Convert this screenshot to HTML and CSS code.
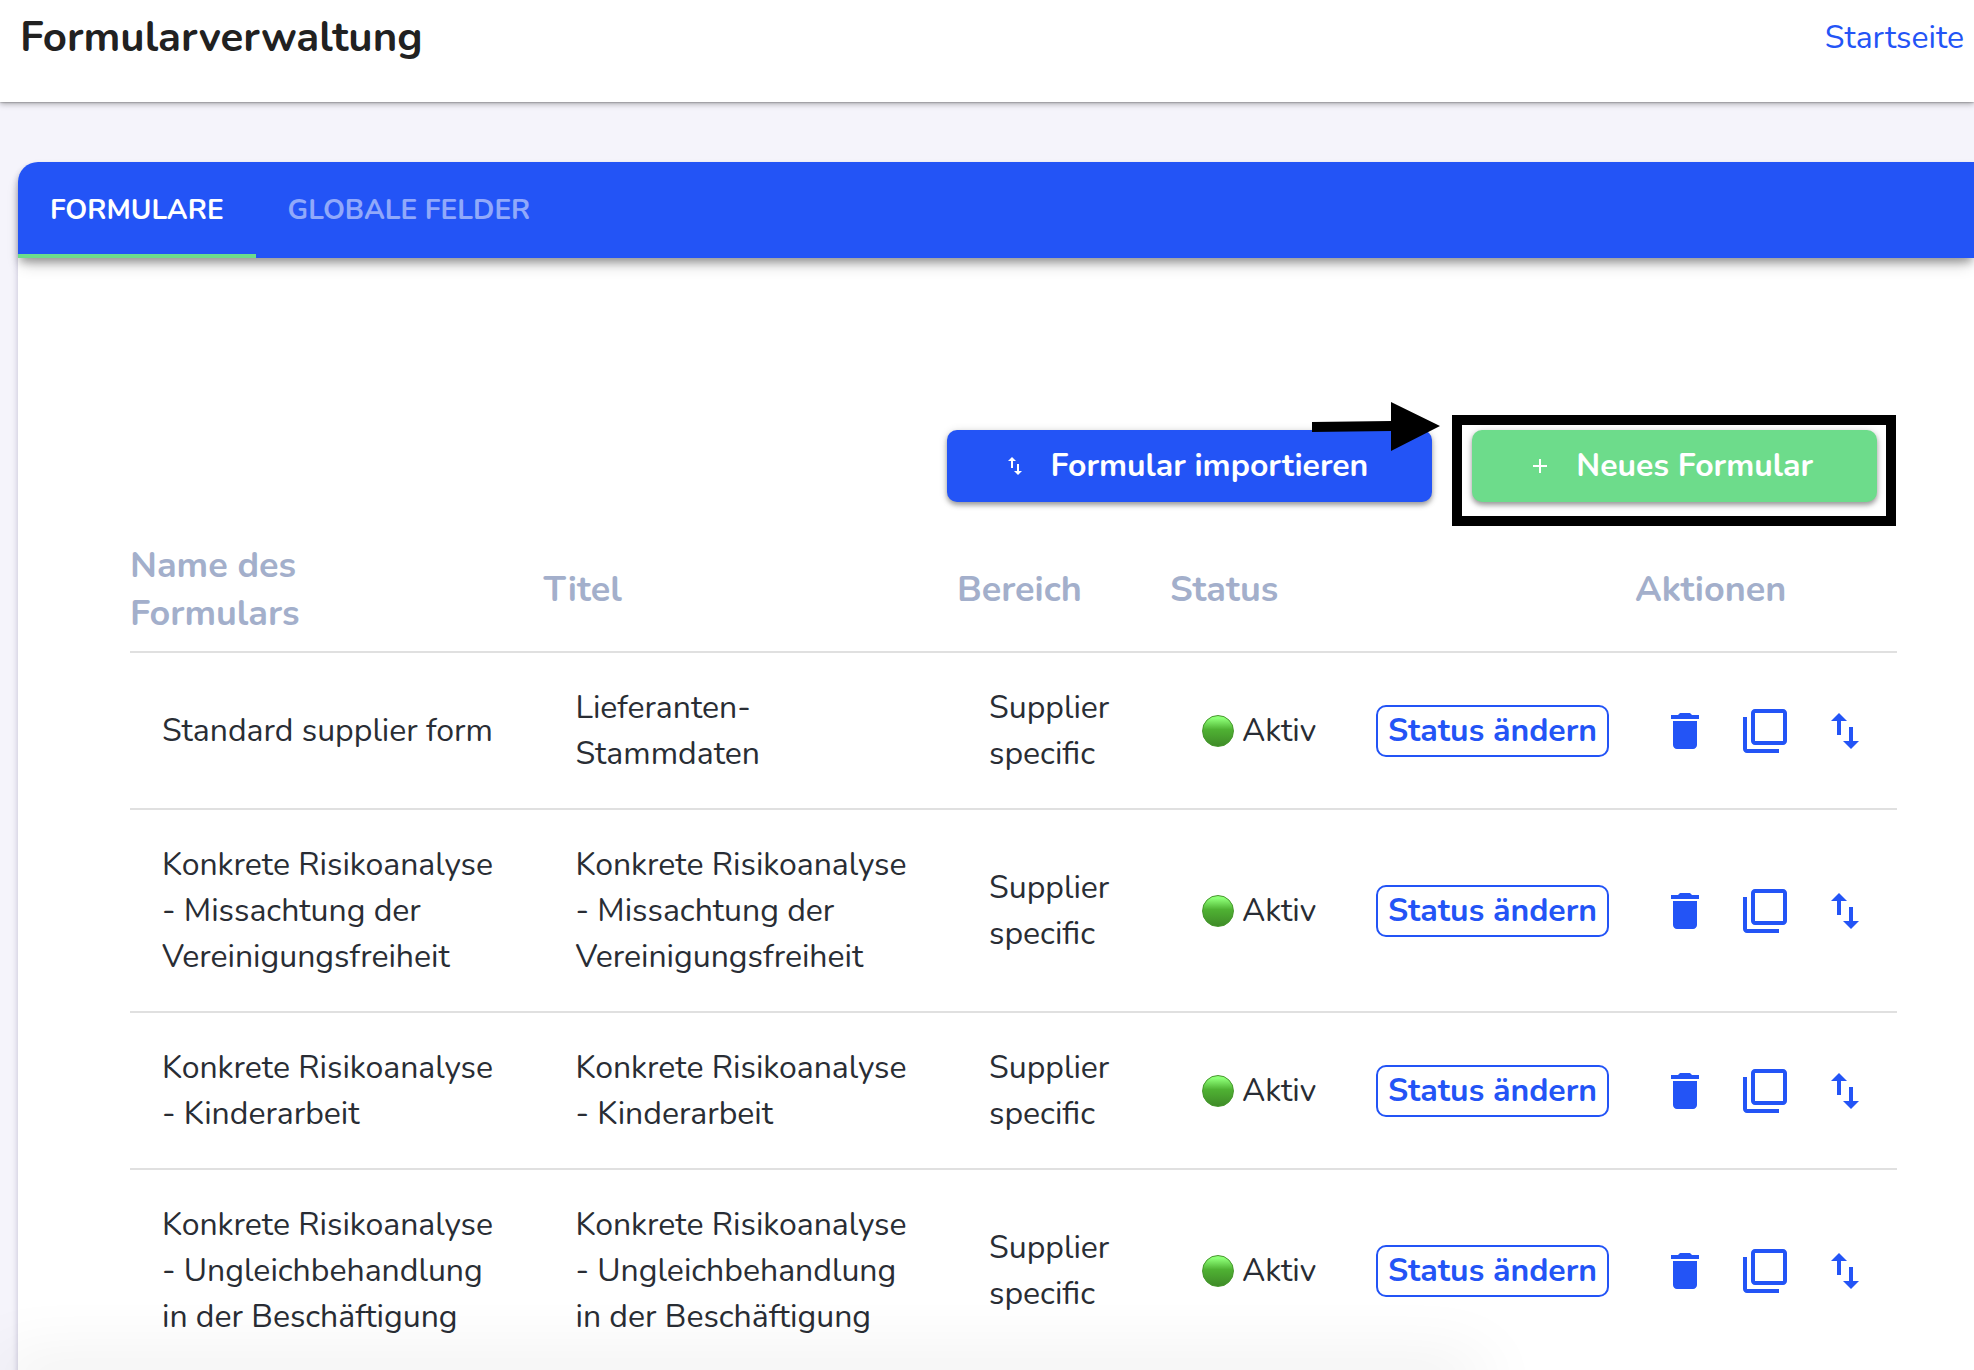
FILE: index.html
```html
<!DOCTYPE html>
<html lang="de">
<head>
<meta charset="utf-8">
<meta name="viewport" content="width=device-width, initial-scale=1">
<title>Formularverwaltung</title>
<link rel="stylesheet" href="styles.css">
</head>
<body>
<svg class="sprite" aria-hidden="true">
  <symbol id="i-trash" viewBox="0 0 24 24"><path d="M6 19c0 1.100.9 2 2 2h8c1.100 0 2-.9 2-2V7H6v12zM19 4h-3.500l-1-1h-5l-1 1H5v2h14V4z"/></symbol>
  <symbol id="i-copy" viewBox="0 0 24 24"><path d="M3 5H1v16c0 1.100.9 2 2 2h16v-2H3V5zm18-4H7c-1.100 0-2 .9-2 2v14c0 1.100.9 2 2 2h14c1.100 0 2-.9 2-2V3c0-1.100-.9-2-2-2zm0 16H7V3h14v14z"/></symbol>
  <symbol id="i-swap" viewBox="0 0 24 24"><path d="M16 17.010V10h-2v7.010h-3L15 21l4-3.990h-3zM9 3L5 6.990h3V14h2V6.990h3L9 3z"/></symbol>
  <symbol id="i-plus" viewBox="0 0 24 24"><path d="M19 13h-6v6h-2v-6H5v-2h6V5h2v6h6v2z"/></symbol>
</svg>

<header class="topbar">
  <h1 class="title">Formularverwaltung</h1>
  <a class="home" href="#">Startseite</a>
</header>

<main class="card">
  <div class="tabs" role="tablist">
    <button class="tab active" role="tab" aria-selected="true">FORMULARE</button>
    <button class="tab" role="tab" aria-selected="false">GLOBALE FELDER</button>
  </div>

  <div class="content">
    <div class="toolbar">
      <button class="btn primary"><svg class="btn-icon"><use href="#i-swap"/></svg>Formular importieren</button>
      <div class="highlight">
        <button class="btn success"><svg class="btn-icon"><use href="#i-plus"/></svg>Neues Formular</button>
        <span class="frame"></span>
        <svg class="arrow" viewBox="0 0 128 49"><path d="M0 20L79 19V0L128 24L79 49V29L0 30z"/></svg>
      </div>
    </div>

    <table class="forms">
      <colgroup>
        <col><col><col class="c-area"><col class="c-status"><col class="c-change"><col class="c-actions">
      </colgroup>
      <thead>
        <tr><th>Name des<br>Formulars</th><th>Titel</th><th>Bereich</th><th>Status</th><th></th><th>Aktionen</th></tr>
      </thead>
      <tbody>
        <tr>
          <td>Standard supplier form</td>
          <td>Lieferanten-<br>Stammdaten</td>
          <td>Supplier<br>specific</td>
          <td><span class="status"><i class="dot"></i>Aktiv</span></td>
          <td><button class="change">Status ändern</button></td>
          <td><div class="icons"><button class="icon" aria-label="Löschen"><svg><use href="#i-trash"/></svg></button><button class="icon" aria-label="Kopieren"><svg><use href="#i-copy"/></svg></button><button class="icon" aria-label="Exportieren"><svg><use href="#i-swap"/></svg></button></div></td>
        </tr>
        <tr>
          <td>Konkrete Risikoanalyse<br>- Missachtung der<br>Vereinigungsfreiheit</td>
          <td>Konkrete Risikoanalyse<br>- Missachtung der<br>Vereinigungsfreiheit</td>
          <td>Supplier<br>specific</td>
          <td><span class="status"><i class="dot"></i>Aktiv</span></td>
          <td><button class="change">Status ändern</button></td>
          <td><div class="icons"><button class="icon" aria-label="Löschen"><svg><use href="#i-trash"/></svg></button><button class="icon" aria-label="Kopieren"><svg><use href="#i-copy"/></svg></button><button class="icon" aria-label="Exportieren"><svg><use href="#i-swap"/></svg></button></div></td>
        </tr>
        <tr>
          <td>Konkrete Risikoanalyse<br>- Kinderarbeit</td>
          <td>Konkrete Risikoanalyse<br>- Kinderarbeit</td>
          <td>Supplier<br>specific</td>
          <td><span class="status"><i class="dot"></i>Aktiv</span></td>
          <td><button class="change">Status ändern</button></td>
          <td><div class="icons"><button class="icon" aria-label="Löschen"><svg><use href="#i-trash"/></svg></button><button class="icon" aria-label="Kopieren"><svg><use href="#i-copy"/></svg></button><button class="icon" aria-label="Exportieren"><svg><use href="#i-swap"/></svg></button></div></td>
        </tr>
        <tr>
          <td>Konkrete Risikoanalyse<br>- Ungleichbehandlung<br>in der Beschäftigung</td>
          <td>Konkrete Risikoanalyse<br>- Ungleichbehandlung<br>in der Beschäftigung</td>
          <td>Supplier<br>specific</td>
          <td><span class="status"><i class="dot"></i>Aktiv</span></td>
          <td><button class="change">Status ändern</button></td>
          <td><div class="icons"><button class="icon" aria-label="Löschen"><svg><use href="#i-trash"/></svg></button><button class="icon" aria-label="Kopieren"><svg><use href="#i-copy"/></svg></button><button class="icon" aria-label="Exportieren"><svg><use href="#i-swap"/></svg></button></div></td>
        </tr>
      </tbody>
    </table>
  </div>
</main>
<div class="shade"></div>
</body>
</html>
```

FILE: styles.css
```css
* { box-sizing: border-box; }

body {
  margin: 0;
  height: 100vh;
  overflow: hidden;
  background: #f5f4fb;
  color: #292d34;
  font: 400 32px/46px Nunito, "Noto Sans", sans-serif;
}

button {
  margin: 0;
  padding: 0;
  border: 0;
  background: none;
  color: inherit;
  font: inherit;
  cursor: pointer;
}

svg { display: block; fill: currentColor; }
.sprite { position: absolute; width: 0; height: 0; }

.topbar {
  display: flex;
  justify-content: space-between;
  padding: 14px 10px 40px 20px;
  background: #fff;
  box-shadow: 0 0 2px rgba(0, 0, 0, .5), 0 2px 6px rgba(0, 0, 0, .3);
}
.title { margin: 0; font-size: 42px; line-height: 48px; font-weight: 700; color: #212121; }
.home { line-height: 48px; color: #2354f6; text-decoration: none; }

.card {
  margin: 60px 0 0 18px;
  border-top-left-radius: 20px;
  background: #fff;
  box-shadow: 0 4px 6px rgba(40, 30, 90, .25);
}
.tabs {
  display: flex;
  border-top-left-radius: 20px;
  background: #2354f6;
  color: #fff;
  box-shadow: 0 6px 8px -2px rgba(0, 0, 0, .3), 0 10px 16px -4px rgba(0, 0, 0, .2);
}
.tab {
  height: 96px;
  padding: 4px 32px 0;
  border-bottom: 4px solid transparent;
  font-size: 28px;
  font-weight: 700;
  color: rgba(255, 255, 255, .5);
}
.tab.active { border-color: #6ddc8b; color: #fff; }

.content { padding: 172px 77px 0 112px; }

.toolbar { display: flex; justify-content: flex-end; gap: 40px; padding-right: 20px; }
.btn {
  display: flex;
  align-items: center;
  gap: 24px;
  height: 72px;
  padding: 0 64px 0 56px;
  border-radius: 10px;
  color: #fff;
  font-weight: 700;
  box-shadow: 0 3px 5px rgba(0, 0, 0, .35), 0 1px 10px rgba(0, 0, 0, .12);
}
.btn-icon { width: 24px; height: 24px; }
.primary { background: #2354f6; }
.success { background: #6ddc8b; }

.highlight { position: relative; }
.frame {
  position: absolute;
  inset: -15px -19px -24px -20px;
  border: 10px solid #000;
  pointer-events: none;
}
.arrow {
  position: absolute;
  left: -160px;
  top: -28px;
  width: 128px;
  height: 49px;
  fill: #000;
}

.forms {
  width: 100%;
  margin-top: 24px;
  table-layout: fixed;
  border-collapse: separate;
  border-spacing: 0;
}
.c-area { width: 213px; }
.c-status { width: 174px; }
.c-change { width: 291px; }
.c-actions { width: 262px; }

th {
  padding: 16px 0 13px;
  border-bottom: 2px solid #e0e0e0;
  color: #a3afcb;
  font-size: 36px;
  line-height: 48px;
  font-weight: 700;
  text-align: left;
}
td {
  padding: 32px 0 31px 32px;
  border-bottom: 2px solid #e0e0e0;
  white-space: nowrap;
}
td:last-child { padding-left: 26px; }

.status { display: flex; align-items: center; gap: 8px; }
.dot {
  width: 32px;
  height: 32px;
  border: 1px solid #46982c;
  border-radius: 50%;
  background: linear-gradient(#8dff77 8%, #4fb233 45%, #3f8b28);
}
.change {
  display: block;
  height: 52px;
  padding: 0 10px;
  border: 2px solid #2354f6;
  border-radius: 10px;
  color: #2354f6;
  font-weight: 700;
}
.icons { display: flex; gap: 32px; color: #2354f6; }
.icon svg { width: 48px; height: 48px; }

/* soft shade along the lower edge of the window */
.shade {
  position: fixed;
  left: 0;
  bottom: -20px;
  width: 75%;
  height: 20px;
  box-shadow: 0 0 70px rgba(0, 0, 0, .16);
  pointer-events: none;
}
```
